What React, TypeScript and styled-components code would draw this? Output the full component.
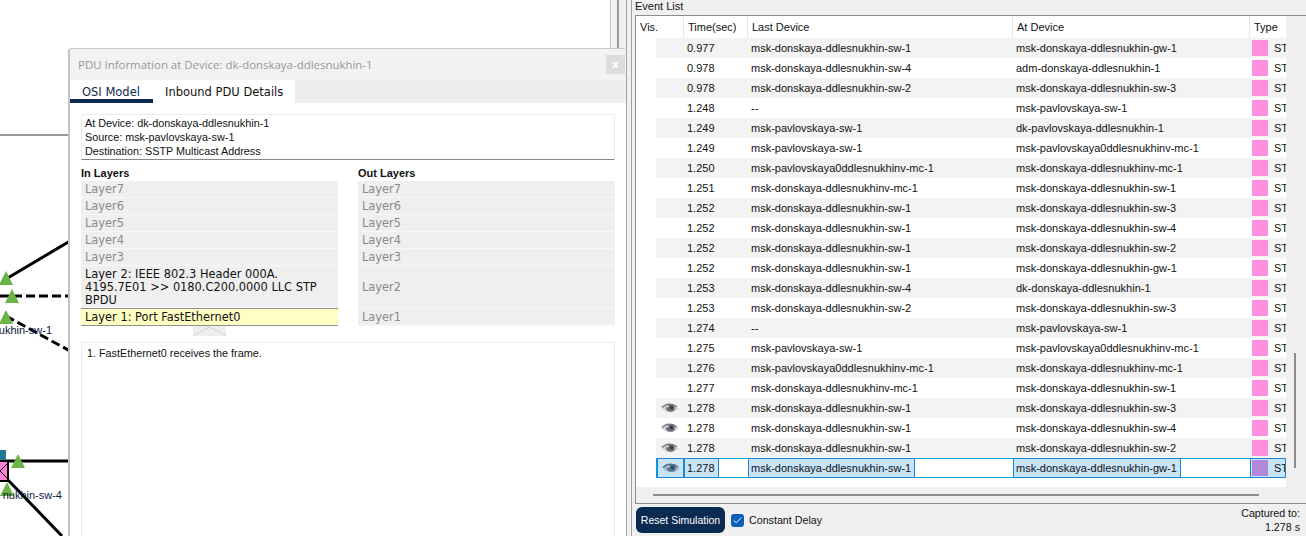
import styled, { createGlobalStyle } from 'styled-components'
import { Check } from 'lucide-react'

const GlobalStyle = createGlobalStyle`
  html, body {
    margin: 0;
    height: 100%;
    overflow: hidden;
    background: #f0f0f0;
  }
  #root {
    height: 100%;
  }
`

const layerNames = ['Layer7', 'Layer6', 'Layer5', 'Layer4', 'Layer3']

const events = [
  ['0.977', 'msk-donskaya-ddlesnukhin-sw-1', 'msk-donskaya-ddlesnukhin-gw-1'],
  ['0.978', 'msk-donskaya-ddlesnukhin-sw-4', 'adm-donskaya-ddlesnukhin-1'],
  ['0.978', 'msk-donskaya-ddlesnukhin-sw-2', 'msk-donskaya-ddlesnukhin-sw-3'],
  ['1.248', '--', 'msk-pavlovskaya-sw-1'],
  ['1.249', 'msk-pavlovskaya-sw-1', 'dk-pavlovskaya-ddlesnukhin-1'],
  ['1.249', 'msk-pavlovskaya-sw-1', 'msk-pavlovskaya0ddlesnukhinv-mc-1'],
  ['1.250', 'msk-pavlovskaya0ddlesnukhinv-mc-1', 'msk-donskaya-ddlesnukhinv-mc-1'],
  ['1.251', 'msk-donskaya-ddlesnukhinv-mc-1', 'msk-donskaya-ddlesnukhin-sw-1'],
  ['1.252', 'msk-donskaya-ddlesnukhin-sw-1', 'msk-donskaya-ddlesnukhin-sw-3'],
  ['1.252', 'msk-donskaya-ddlesnukhin-sw-1', 'msk-donskaya-ddlesnukhin-sw-4'],
  ['1.252', 'msk-donskaya-ddlesnukhin-sw-1', 'msk-donskaya-ddlesnukhin-sw-2'],
  ['1.252', 'msk-donskaya-ddlesnukhin-sw-1', 'msk-donskaya-ddlesnukhin-gw-1'],
  ['1.253', 'msk-donskaya-ddlesnukhin-sw-4', 'dk-donskaya-ddlesnukhin-1'],
  ['1.253', 'msk-donskaya-ddlesnukhin-sw-2', 'msk-donskaya-ddlesnukhin-sw-3'],
  ['1.274', '--', 'msk-pavlovskaya-sw-1'],
  ['1.275', 'msk-pavlovskaya-sw-1', 'msk-pavlovskaya0ddlesnukhinv-mc-1'],
  ['1.276', 'msk-pavlovskaya0ddlesnukhinv-mc-1', 'msk-donskaya-ddlesnukhinv-mc-1'],
  ['1.277', 'msk-donskaya-ddlesnukhinv-mc-1', 'msk-donskaya-ddlesnukhin-sw-1'],
  ['1.278', 'msk-donskaya-ddlesnukhin-sw-1', 'msk-donskaya-ddlesnukhin-sw-3', 'eye'],
  ['1.278', 'msk-donskaya-ddlesnukhin-sw-1', 'msk-donskaya-ddlesnukhin-sw-4', 'eye'],
  ['1.278', 'msk-donskaya-ddlesnukhin-sw-1', 'msk-donskaya-ddlesnukhin-sw-2', 'eye'],
  ['1.278', 'msk-donskaya-ddlesnukhin-sw-1', 'msk-donskaya-ddlesnukhin-gw-1', 'selected'],
]

const EyeIcon = ({ tinted }: { tinted: boolean }) => (
  <svg width="18" height="12" viewBox="0 0 18 12">
    <path d="M0.5 6C4 1 12 0 17.5 6.5C13 11.5 5 11.5 0.5 6Z" fill={tinted ? '#9db8cf' : '#d2d2d2'} />
    <path d="M1 5.5C4.5 1.5 11.5 0.5 16 5" fill="none" stroke={tinted ? '#52687c' : '#7c7c7c'} strokeWidth="1.2" />
    <ellipse cx="9.5" cy="6" rx="4.4" ry="3.8" fill={tinted ? '#5a7690' : '#6a7078'} />
    <circle cx="10.5" cy="5.6" r="1.8" fill={tinted ? '#2c4358' : '#363b40'} />
    <circle cx="6.5" cy="4.6" r="1" fill="#f2f2f2" />
  </svg>
)

const Triangle = ({ x, y }: { x: number; y: number }) => (
  <polygon points={`${x},${y - 7} ${x + 7},${y + 7} ${x - 7},${y + 7}`} fill="#6ab545" />
)

const NetworkDrawing = () => (
  <CanvasSvg width="70" height="536" viewBox="0 0 70 536">
    <line x1="0" y1="135" x2="70" y2="135" stroke="#333" strokeWidth="1" />
    <line x1="6" y1="279" x2="70" y2="241" stroke="#000" strokeWidth="3" />
    <line x1="0" y1="296" x2="70" y2="296" stroke="#000" strokeWidth="3" strokeDasharray="9 4" />
    <line x1="6" y1="316" x2="70" y2="351" stroke="#000" strokeWidth="3" strokeDasharray="9 4" />
    <line x1="0" y1="461" x2="70" y2="461" stroke="#000" strokeWidth="3" />
    <line x1="8" y1="480" x2="62" y2="536" stroke="#000" strokeWidth="3" />
    <rect x="0" y="450" width="6" height="10" fill="#1f7a93" />
    <rect x="-4" y="461" width="12" height="20" fill="#ff80d8" stroke="#000" strokeWidth="2" />
    <path d="M8 463L0 471L8 479" fill="none" stroke="#000" strokeWidth="1" />
    <Triangle x={6} y={278} />
    <Triangle x={12} y={296} />
    <Triangle x={6} y={317} />
    <Triangle x={18} y={461} />
    <Triangle x={7} y={489} />
  </CanvasSvg>
)

export default function App() {
  return (
    <>
      <GlobalStyle />
      <Page>
        <Workspace>
          <Canvas>
            <NetworkDrawing />
            <NodeLabel $top={324} $right={558}>ukhin-sw-1</NodeLabel>
            <NodeLabel $top={489} $right={548}>nukhin-sw-4</NodeLabel>
          </Canvas>
          <CanvasEdge />
          <PduWindow>
            <TitleBar>
              <span>PDU Information at Device: dk-donskaya-ddlesnukhin-1</span>
              <CloseButton>x</CloseButton>
            </TitleBar>
            <TabBar>
              <Tab $active>OSI Model</Tab>
              <Tab>Inbound PDU Details</Tab>
            </TabBar>
            <WindowBody>
              <InfoBox>
                <div>At Device: dk-donskaya-ddlesnukhin-1</div>
                <div>Source: msk-pavlovskaya-sw-1</div>
                <div>Destination: SSTP Multicast Address</div>
              </InfoBox>
              <LayerColumns>
                <div>
                  <LayerHeading>In Layers</LayerHeading>
                  <LayerList>
                    {layerNames.map((name) => (
                      <LayerRow key={name}>{name}</LayerRow>
                    ))}
                    <LayerRow $active $tall>
                      Layer 2: IEEE 802.3 Header 000A.
                      <br />
                      4195.7E01 &gt;&gt; 0180.C200.0000 LLC STP
                      <br />
                      BPDU
                    </LayerRow>
                    <LayerRow $active $current>
                      Layer 1: Port FastEthernet0
                    </LayerRow>
                  </LayerList>
                </div>
                <div>
                  <LayerHeading>Out Layers</LayerHeading>
                  <LayerList>
                    {layerNames.map((name) => (
                      <LayerRow key={name}>{name}</LayerRow>
                    ))}
                    <LayerRow $tall>Layer2</LayerRow>
                    <LayerRow $last>Layer1</LayerRow>
                  </LayerList>
                </div>
              </LayerColumns>
              <SplitHandle>
                <svg width="33" height="10" viewBox="0 0 33 10">
                  <path d="M0 9.5L16.5 1L33 9.5" fill="none" stroke="#cfcfcf" />
                </svg>
              </SplitHandle>
              <DescriptionBox>1. FastEthernet0 receives the frame.</DescriptionBox>
            </WindowBody>
          </PduWindow>
        </Workspace>
        <EventPanel>
          <PanelTitle>Event List</PanelTitle>
          <TableFrame>
            <TableArea>
              <HeaderRow>
                <HeaderCell>Vis.</HeaderCell>
                <HeaderCell>Time(sec)</HeaderCell>
                <HeaderCell>Last Device</HeaderCell>
                <HeaderCell>At Device</HeaderCell>
                <HeaderCell>Type</HeaderCell>
              </HeaderRow>
              <Rows>
                {events.map(([time, last, at, mark], index) => {
                  const selected = mark === 'selected'
                  return (
                    <EventRow key={index} $striped={index % 2 === 0} $selected={selected}>
                      <VisCell $selected={selected}>{mark ? <EyeIcon tinted={selected} /> : null}</VisCell>
                      <TextCell>
                        <CellText $selected={selected}>{time}</CellText>
                      </TextCell>
                      <TextCell>
                        <CellText $selected={selected}>{last}</CellText>
                      </TextCell>
                      <TextCell>
                        <CellText $selected={selected}>{at}</CellText>
                      </TextCell>
                      <TypeCell $selected={selected}>
                        <Swatch $selected={selected} />
                        <span>ST</span>
                      </TypeCell>
                    </EventRow>
                  )
                })}
              </Rows>
              <HorizontalScroll>
                <HorizontalThumb />
              </HorizontalScroll>
            </TableArea>
            <VerticalScroll>
              <VerticalThumb />
            </VerticalScroll>
          </TableFrame>
          <Footer>
            <ResetButton>Reset Simulation</ResetButton>
            <DelayToggle>
              <CheckBox>
                <Check size={11} color="#fff" strokeWidth={2} />
              </CheckBox>
              Constant Delay
            </DelayToggle>
            <Captured>
              <div>Captured to:</div>
              <div>1.278 s</div>
            </Captured>
          </Footer>
        </EventPanel>
      </Page>
    </>
  )
}

const Page = styled.div`
  display: flex;
  width: 1306px;
  height: 536px;
  overflow: hidden;
  font-family: 'Liberation Sans', Arial, sans-serif;
  font-size: 11px;
  color: #111;
`

const Workspace = styled.div`
  position: relative;
  display: flex;
  width: 627px;
  flex: none;
`

const Canvas = styled.div`
  position: relative;
  width: 610px;
  background: #fff;
  overflow: hidden;
`

const CanvasSvg = styled.svg`
  position: absolute;
  left: 0;
  top: 0;
`

const NodeLabel = styled.span<{ $top: number; $right: number }>`
  position: absolute;
  top: ${(props) => props.$top}px;
  right: ${(props) => props.$right}px;
  font-size: 11px;
  color: #0b1a3a;
  white-space: nowrap;
`

const CanvasEdge = styled.div`
  flex: 1;
  padding-left: 6px;
  background: #f0f0f0;
  border-left: 1px solid #c4c4c4;
  border-right: 1px solid #a0a0ac;

  &::before {
    content: '';
    display: block;
    width: 2px;
    height: 100%;
    background: #9c9c9c;
  }
`

const PduWindow = styled.div`
  position: absolute;
  left: 68px;
  top: 48px;
  width: 558px;
  height: 488px;
  box-sizing: border-box;
  display: flex;
  flex-direction: column;
  background: #fff;
  border-top: 1px solid #c8c8c8;
  border-left: 2px solid #c4c4c4;
  border-radius: 4px 4px 0 0;
`

const TitleBar = styled.div`
  height: 31px;
  padding: 0 1px 0 8px;
  display: flex;
  align-items: center;
  justify-content: space-between;
  background: #f2f2f2;
  color: #979797;
  font-family: 'Open Sans', sans-serif;
  font-size: 11.45px;
  border-radius: 4px 4px 0 0;
`

const CloseButton = styled.div`
  width: 19px;
  height: 19px;
  display: flex;
  align-items: center;
  justify-content: center;
  background: #dcdcdc;
  color: #fff;
  font-family: 'DejaVu Sans', sans-serif;
  font-weight: bold;
  font-size: 10px;
`

const TabBar = styled.div`
  display: flex;
  height: 23px;
  background: #eeeeee;
`

const Tab = styled.div<{ $active?: boolean }>`
  box-sizing: border-box;
  width: ${(props) => (props.$active ? '83px' : '142px')};
  padding: 5px 0 0 12px;
  background: #fff;
  font-family: 'DejaVu Sans', sans-serif;
  font-size: 11.5px;
  color: ${(props) => (props.$active ? '#0c2a50' : '#111')};
  border-bottom: ${(props) => (props.$active ? '4px solid #0c2a50' : '0')};
`

const WindowBody = styled.div`
  flex: 1;
  display: flex;
  flex-direction: column;
  padding: 11px 11px 0 11px;
  min-height: 0;
`

const InfoBox = styled.div`
  box-sizing: border-box;
  height: 46px;
  padding: 1px 3px;
  line-height: 14px;
  font-size: 10.8px;
  border: 1px solid #ececec;
  border-bottom: 1px solid #888;
`

const LayerColumns = styled.div`
  display: grid;
  grid-template-columns: 257px 257px;
  justify-content: space-between;
`

const LayerHeading = styled.div`
  height: 21px;
  line-height: 14px;
  padding-top: 6px;
  box-sizing: border-box;
  font-weight: bold;
  font-size: 11px;
`

const LayerList = styled.div`
  display: flex;
  flex-direction: column;
`

const LayerRow = styled.div<{ $active?: boolean; $tall?: boolean; $current?: boolean; $last?: boolean }>`
  box-sizing: border-box;
  height: ${(props) => (props.$tall ? '42px' : props.$current || props.$last ? '18px' : '17px')};
  padding: 2px 4px 0;
  line-height: 13px;
  font-family: 'DejaVu Sans', sans-serif;
  font-size: 11.4px;
  white-space: nowrap;
  background: ${(props) => (props.$current ? '#ffffc4' : '#efefef')};
  color: ${(props) => (props.$active ? '#111' : '#8a8a8a')};
  border-bottom: ${(props) => (props.$current ? '1px solid #8f8f8f' : '1px solid #f7f7f7')};
  border-top: ${(props) => (props.$current ? '1px solid #8f8f8f' : '0')};
  padding-top: ${(props) => (props.$tall ? (props.$active ? '2px' : '15px') : props.$last ? '3px' : '2px')};
`

const SplitHandle = styled.div`
  height: 16px;
  padding-left: 112px;

  svg {
    display: block;
    background: #eeeeee;
  }
`

const DescriptionBox = styled.div`
  flex: 1;
  border: 1px solid #ececec;
  border-bottom: 0;
  padding: 3px 5px;
  font-size: 10.8px;
  line-height: 14px;
`

const EventPanel = styled.div`
  flex: 1;
  display: flex;
  flex-direction: column;
  margin-left: 4px;
  padding-left: 3px;
  min-width: 0;
  background: #f0f0f0;
  border-left: 1px solid #a0a0ac;
`

const PanelTitle = styled.div`
  height: 15px;
  line-height: 12px;
  font-size: 11px;
`

const TableFrame = styled.div`
  box-sizing: border-box;
  height: 489px;
  display: flex;
  border: 1px solid #8e8e8e;
  border-right: 0;
`

const TableArea = styled.div`
  width: 650px;
  display: flex;
  flex-direction: column;
`

const HeaderRow = styled.div`
  display: grid;
  grid-template-columns: 48px 64px 265px 237px 36px;
  height: 22px;
  background: #fff;
`

const HeaderCell = styled.div`
  padding-left: 4px;
  line-height: 22px;
  border-right: 1px solid #e8e8e8;
  &:last-child {
    border-right: 0;
  }
`

const Rows = styled.div`
  flex: 1;
  background: #fff;
  padding-left: 20px;
`

const EventRow = styled.div<{ $striped: boolean; $selected: boolean }>`
  box-sizing: border-box;
  height: 20px;
  display: grid;
  grid-template-columns: 28px 64px 265px 237px 36px;
  background: ${(props) => (props.$striped ? '#f3f3f3' : '#fff')};
  ${(props) => (props.$selected ? 'background: #fff; box-shadow: inset 0 0 0 1px #00a8e8;' : '')}
`

const VisCell = styled.div<{ $selected: boolean }>`
  display: flex;
  align-items: center;
  justify-content: center;
  box-sizing: border-box;
  ${(props) => (props.$selected ? 'background: #c8e4fa; border: 1px solid #1a86cf; margin-left: 1px;' : '')}
`

const TextCell = styled.div`
  display: flex;
  align-items: stretch;
  line-height: 20px;
  white-space: nowrap;
  overflow: hidden;
`

const CellText = styled.span<{ $selected: boolean }>`
  box-sizing: border-box;
  padding: 0 3px;
  ${(props) =>
    props.$selected ? 'background: #c8e4fa; border: 1px solid #1a86cf; padding: 0 3px 0 2px; line-height: 18px;' : ''}
`

const TypeCell = styled.div<{ $selected: boolean }>`
  box-sizing: border-box;
  display: flex;
  align-items: center;
  gap: 6px;
  padding-left: 2px;
  overflow: hidden;
  white-space: nowrap;
  ${(props) =>
    props.$selected ? 'background: #c8e4fa; border: 1px solid #1a86cf; padding-left: 1px;' : ''}
`

const Swatch = styled.div<{ $selected: boolean }>`
  width: 16px;
  height: 16px;
  flex: none;
  background: ${(props) => (props.$selected ? '#b388db' : '#ff8fdf')};
`

const HorizontalScroll = styled.div`
  height: 16px;
  background: #f0f0f0;
  display: flex;
  align-items: center;
  padding-left: 17px;
`

const HorizontalThumb = styled.div`
  width: 606px;
  height: 2px;
  background: #8c8c8c;
`

const VerticalScroll = styled.div`
  flex: 1;
  padding: 337px 0 0 8px;
  background: #f0f0f0;
`

const VerticalThumb = styled.div`
  width: 2px;
  height: 115px;
  background: #8c8c8c;
`

const Footer = styled.div`
  flex: 1;
  display: flex;
  align-items: center;
  padding-left: 1px;
`

const ResetButton = styled.div`
  width: 89px;
  height: 26px;
  display: flex;
  align-items: center;
  justify-content: center;
  border-radius: 6px;
  background: #0b2a4f;
  color: #fff;
  font-size: 10.5px;
`

const DelayToggle = styled.div`
  display: flex;
  align-items: center;
  gap: 5px;
  margin-left: 6px;
  font-size: 10.7px;
`

const CheckBox = styled.div`
  width: 13px;
  height: 13px;
  display: flex;
  align-items: center;
  justify-content: center;
  background: #0b5fb8;
  border-radius: 3px;
`

const Captured = styled.div`
  margin-left: auto;
  padding-right: 6px;
  text-align: right;
  line-height: 14px;
  font-size: 10.7px;
`
